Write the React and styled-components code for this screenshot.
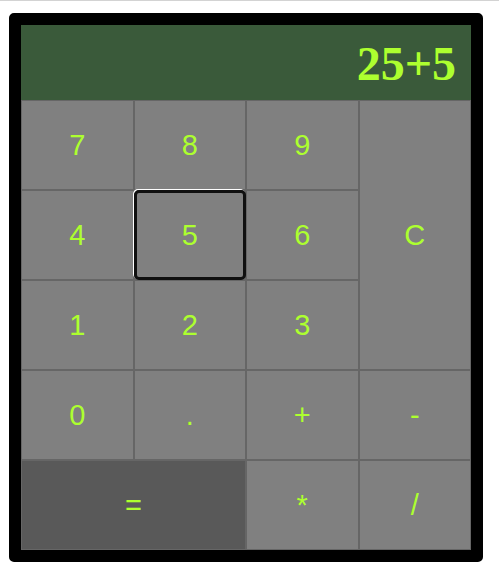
import React from "react";
import styled, { createGlobalStyle, css } from "styled-components";

const Global = createGlobalStyle`
  html, body { margin: 0; padding: 0; background: #fff; }
  body { font-family: "Liberation Sans", Arial, sans-serif; }
`;

const Page = styled.div`
  border-top: 1px solid #d3d3d3;
  padding: 12px 0 0 9px;
`;

const Calculator = styled.div`
  width: 450px;
  border: 12px solid #000;
  border-radius: 5px;
  background: #000;
`;

const Display = styled.div`
  height: 75px;
  background: #3a5a3a;
  color: #adff2f;
  font-family: "Liberation Serif", "Times New Roman", serif;
  font-weight: bold;
  font-size: 48px;
  display: flex;
  align-items: center;
  justify-content: flex-end;
  padding: 2px 15px 0 0;
  box-sizing: border-box;
`;

const Keys = styled.div`
  display: grid;
  grid-template-columns: repeat(4, 1fr);
  grid-template-rows: repeat(5, 90px);
`;

const Key = styled.button`
  position: relative;
  margin: 0;
  padding: 0;
  border: 1px solid #666;
  background: ${(p) => (p.$dark ? "#595959" : "#808080")};
  color: #adff2f;
  font-family: "Liberation Sans", Arial, sans-serif;
  font-size: 29px;
  display: flex;
  align-items: center;
  justify-content: center;
  grid-column: ${(p) => p.$col || "auto"};
  grid-row: ${(p) => p.$row || "auto"};
  outline: none;
  ${(p) =>
    p.$focused &&
    css`
      &::after {
        content: "";
        position: absolute;
        left: -1px;
        top: -1px;
        right: -1px;
        bottom: -1px;
        border: 3px solid #101010;
        border-radius: 5px;
        box-shadow: -1px -1px 0 0 #fff;
      }
    `}
`;

const keys = [
  { k: "7" }, { k: "8" }, { k: "9" }, { k: "C", col: "4", row: "1 / span 3" },
  { k: "4" }, { k: "5", focused: true }, { k: "6" },
  { k: "1" }, { k: "2" }, { k: "3" },
  { k: "0" }, { k: "." }, { k: "+" }, { k: "-" },
  { k: "=", col: "1 / span 2", dark: true }, { k: "*" }, { k: "/" },
];

export default function App() {
  return (
    <>
      <Global />
      <Page>
        <Calculator>
          <Display>25+5</Display>
          <Keys>
            {keys.map((b) => (
              <Key
                key={b.k}
                $col={b.col}
                $row={b.row}
                $dark={b.dark}
                $focused={b.focused}
              >
                {b.k}
              </Key>
            ))}
          </Keys>
        </Calculator>
      </Page>
    </>
  );
}
